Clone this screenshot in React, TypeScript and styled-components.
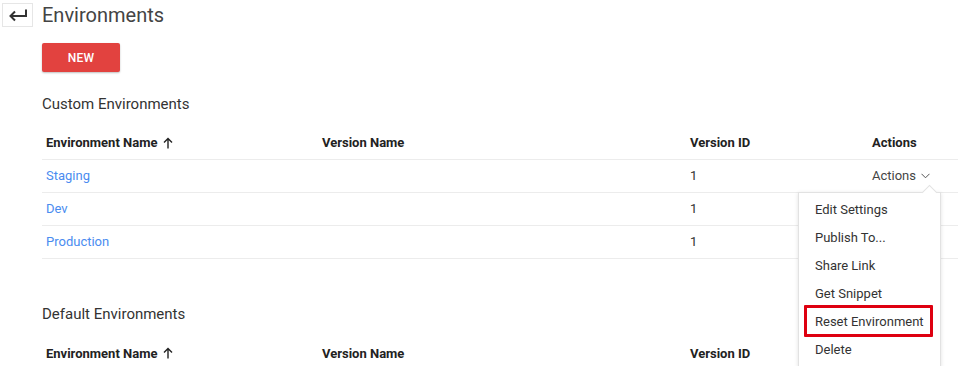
import React from "react";
import styled, { createGlobalStyle } from "styled-components";

const Global = createGlobalStyle`
  html, body { margin: 0; padding: 0; background: #fff; }
  body { font-family: Roboto, "Noto Sans", Arial, sans-serif; color: #333; overflow: hidden; }
  * { box-sizing: border-box; }
`;

const Page = styled.div`
  width: 970px;
  height: 366px;
  position: relative;
  overflow: hidden;
`;

const TopBar = styled.div`
  display: flex;
  align-items: center;
  padding: 2px 0 0 2px;
  gap: 9px;
`;

const BackButton = styled.div`
  width: 31px;
  height: 24px;
  border: 1px solid #e6e6e6;
  display: flex;
  align-items: center;
  justify-content: center;
`;

const Title = styled.h1`
  margin: 0;
  font-size: 20px;
  font-weight: 400;
  color: #444;
  line-height: 26px;
`;

const Content = styled.div`
  padding: 0 12px 0 42px;
`;

const NewButton = styled.button`
  margin-top: 15px;
  width: 78px;
  height: 29px;
  border: none;
  border-radius: 2px;
  background: #e2423f;
  color: #fff;
  font-family: Roboto, Arial, sans-serif;
  font-size: 12px;
  font-weight: 500;
  letter-spacing: 0.2px;
  box-shadow: 0 1px 2px rgba(0,0,0,0.25);
  padding: 0;
  display: block;
`;

const SectionTitle = styled.h2<{ $top: number }>`
  margin: ${(p) => p.$top}px 0 0 0;
  font-size: 15px;
  font-weight: 400;
  color: #333;
  line-height: 20px;
`;

const Table = styled.div`
  margin-top: 12px;
  width: 916px;
`;

const Row = styled.div<{ $head?: boolean; $noLine?: boolean }>`
  display: grid;
  grid-template-columns: 276px 368px 182px 90px;
  height: ${(p) => (p.$head ? 34 : 33)}px;
  align-items: center;
  border-bottom: ${(p) => (p.$noLine ? "none" : "1px solid #ececec")};
  font-size: 13px;
`;

const HeadCell = styled.div`
  padding-left: 4px;
  font-weight: 700;
  color: #222;
  display: flex;
  align-items: center;
  gap: 6px;
  position: relative;
`;

const Cell = styled.div`
  padding-left: 4px;
  padding-bottom: 1px;
  color: #333;
  position: relative;
`;

const LinkCell = styled(Cell)`
  color: #4a8cf0;
`;

const ActionsToggle = styled.span`
  display: inline-flex;
  align-items: center;
  gap: 5px;
  color: #444;
`;

const Menu = styled.div`
  position: absolute;
  top: 24px;
  left: -70px;
  width: 143px;
  background: #fff;
  border: 1px solid #e2e2e2;
  box-shadow: 0 1px 4px rgba(0,0,0,0.12);
  padding: 3px 0 2px;
  z-index: 5;
  &::before {
    content: "";
    position: absolute;
    top: -6px;
    left: 125px;
    width: 10px;
    height: 10px;
    background: #fff;
    border-left: 1px solid #e2e2e2;
    border-top: 1px solid #e2e2e2;
    transform: rotate(45deg);
  }
`;

const MenuItem = styled.div<{ $highlight?: boolean }>`
  position: relative;
  height: 28px;
  line-height: 28px;
  padding-left: 16px;
  font-size: 13px;
  color: #333;
  white-space: nowrap;
  &::after {
    content: "";
    display: ${(p) => (p.$highlight ? "block" : "none")};
    position: absolute;
    left: 5px;
    right: 7px;
    top: -3px;
    bottom: -1px;
    border: 3px solid #de0010;
    border-radius: 1px;
  }
`;

const BackIcon = () => (
  <svg width="20" height="14" viewBox="0 0 20 14" fill="none">
    <path d="M18 1.5 V8 H2.5" stroke="#333" strokeWidth="2" />
    <path d="M7 3.5 L2.5 8 L7 12.5" stroke="#333" strokeWidth="2" />
  </svg>
);

const UpArrow = () => (
  <svg width="10" height="12" viewBox="0 0 10 12" fill="none">
    <path d="M5 11.5 V1.5 M1 5.5 L5 1.5 L9 5.5" stroke="#222" strokeWidth="1.4" />
  </svg>
);

const Chevron = () => (
  <svg width="9" height="6" viewBox="0 0 9 6" fill="none">
    <path d="M0.5 0.8 L4.5 4.8 L8.5 0.8" stroke="#555" strokeWidth="1" />
  </svg>
);

const rows = ["Staging", "Dev", "Production"];
const menuItems = ["Edit Settings", "Publish To...", "Share Link", "Get Snippet", "Reset Environment", "Delete"];

const Header = ({ noLine }: { noLine?: boolean }) => (
  <Row $head $noLine={noLine}>
    <HeadCell>
      Environment Name <UpArrow />
    </HeadCell>
    <HeadCell>Version Name</HeadCell>
    <HeadCell>Version ID</HeadCell>
    <HeadCell>Actions</HeadCell>
  </Row>
);

export default function App() {
  return (
    <Page>
      <Global />
      <TopBar>
        <BackButton>
          <BackIcon />
        </BackButton>
        <Title>Environments</Title>
      </TopBar>
      <Content>
        <NewButton>NEW</NewButton>
        <SectionTitle $top={22}>Custom Environments</SectionTitle>
        <Table>
          <Header />
          {rows.map((name, i) => (
            <Row key={name}>
              <LinkCell>{name}</LinkCell>
              <Cell />
              <Cell>1</Cell>
              <Cell>
                {i === 0 && (
                  <>
                    <ActionsToggle>
                      Actions <Chevron />
                    </ActionsToggle>
                    <Menu>
                      {menuItems.map((m) => (
                        <MenuItem key={m} $highlight={m === "Reset Environment"}>
                          {m}
                        </MenuItem>
                      ))}
                    </Menu>
                  </>
                )}
              </Cell>
            </Row>
          ))}
        </Table>
        <SectionTitle $top={45}>Default Environments</SectionTitle>
        <Table>
          <Header noLine />
        </Table>
      </Content>
    </Page>
  );
}
